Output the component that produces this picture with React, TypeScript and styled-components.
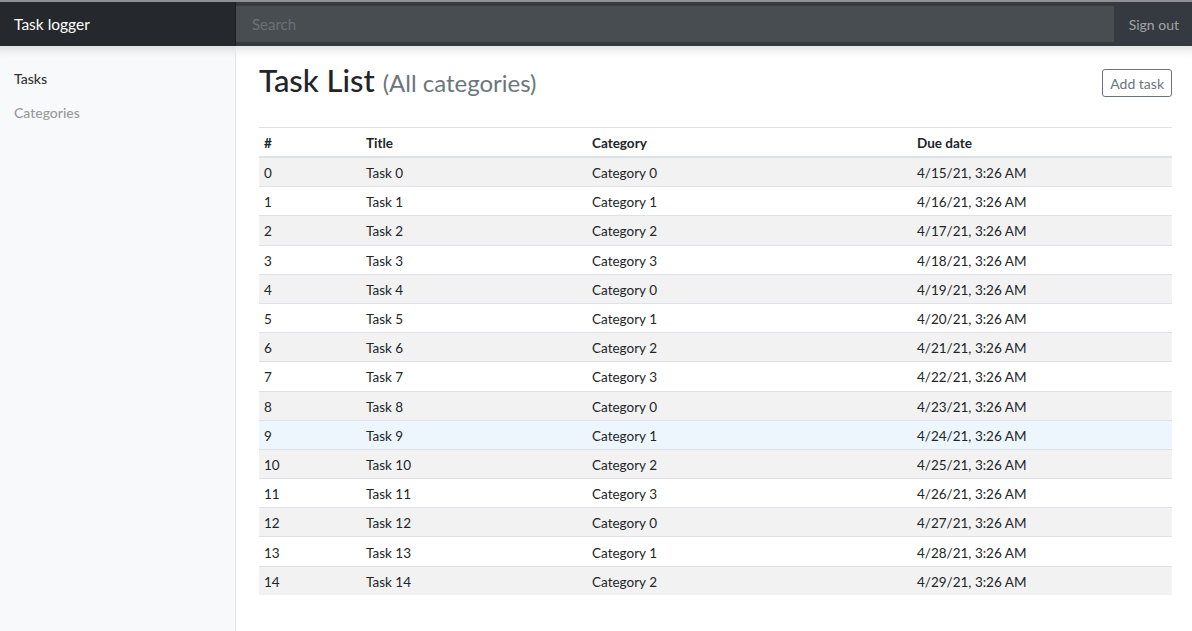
import React from 'react';
import styled, { createGlobalStyle } from 'styled-components';

const GlobalStyle = createGlobalStyle`
  html, body {
    margin: 0;
    padding: 0;
    background: #fff;
    font-family: Lato, "Noto Sans", "Liberation Sans", sans-serif;
    color: #212529;
  }
  * {
    box-sizing: border-box;
  }
`;

const tasks = Array.from({ length: 15 }, (_, i) => ({
  id: i,
  title: `Task ${i}`,
  category: `Category ${i % 4}`,
  due: `4/${15 + i}/21, 3:26 AM`,
}));

const App = () => {
  return (
    <Page>
      <GlobalStyle />
      <Navbar>
        <Brand>Task logger</Brand>
        <Search placeholder="Search" />
        <SignOut>Sign out</SignOut>
      </Navbar>
      <Body>
        <Sidebar>
          <NavLink $active>Tasks</NavLink>
          <NavLink>Categories</NavLink>
        </Sidebar>
        <Main>
          <Header>
            <Title>
              Task List <small>(All categories)</small>
            </Title>
            <OutlineButton>Add task</OutlineButton>
          </Header>
          <Table>
            <thead>
              <tr>
                <th style={{ width: 102 }}>#</th>
                <th style={{ width: 226 }}>Title</th>
                <th style={{ width: 325 }}>Category</th>
                <th>Due date</th>
              </tr>
            </thead>
            <tbody>
              {tasks.map((task) => (
                <Row key={task.id} $hover={task.id === 9}>
                  <td>{task.id}</td>
                  <td>{task.title}</td>
                  <td>{task.category}</td>
                  <td>{task.due}</td>
                </Row>
              ))}
            </tbody>
          </Table>
        </Main>
      </Body>
    </Page>
  );
};

export default App;

const Page = styled.div`
  height: 631px;
  display: flex;
  flex-direction: column;
  overflow: hidden;
`;

const Navbar = styled.header`
  height: 46px;
  display: flex;
  align-items: stretch;
  background: #343a40;
  border-top: 2px solid #8e9194;
  position: relative;
  z-index: 2;
`;

const Brand = styled.div`
  width: 236px;
  flex-shrink: 0;
  display: flex;
  align-items: center;
  padding-left: 14px;
  background: #25282c;
  color: #fff;
  font-size: 15.5px;
  box-shadow: inset -1px 0 0 rgba(0, 0, 0, 0.25);
`;

const Search = styled.input`
  flex: 1;
  margin: 4px 0;
  border: none;
  outline: none;
  padding: 0 16px;
  background: #484d52;
  color: #fff;
  font-family: inherit;
  font-size: 15px;
  &::placeholder {
    color: #6c7176;
  }
`;

const SignOut = styled.a`
  display: flex;
  align-items: center;
  padding: 0 13px 0 15px;
  color: rgba(255, 255, 255, 0.55);
  font-size: 14px;
  cursor: pointer;
`;

const Body = styled.div`
  flex: 1;
  display: flex;
  min-height: 0;
`;

const Sidebar = styled.nav`
  width: 236px;
  flex-shrink: 0;
  background: #f8f9fa;
  border-right: 1px solid #e4e5e6;
  box-shadow: inset 0 12px 10px -8px rgba(0, 0, 0, 0.12);
  padding-top: 16px;
  display: flex;
  flex-direction: column;
`;

const NavLink = styled.a<{ $active?: boolean }>`
  padding: 6px 14px;
  font-size: 14px;
  line-height: 22px;
  color: ${({ $active }) => ($active ? '#333' : '#999')};
  font-weight: 500;
`;

const Main = styled.main`
  flex: 1;
  padding: 0 20px 0 23px;
  box-shadow: inset 0 12px 10px -8px rgba(0, 0, 0, 0.12);
`;

const Header = styled.div`
  display: flex;
  justify-content: space-between;
  align-items: flex-start;
  padding-top: 14px;
  height: 81px;
`;

const Title = styled.h1`
  margin: 0;
  font-size: 31px;
  font-weight: 500;
  line-height: 40px;
  color: #212529;
  small {
    font-size: 24px;
    font-weight: 400;
    color: #6c757d;
  }
`;

const OutlineButton = styled.button`
  margin-top: 9px;
  height: 28px;
  padding: 0 7px;
  font-family: inherit;
  font-size: 14px;
  color: #6c757d;
  background: #fff;
  border: 1px solid #6c757d;
  border-radius: 3px;
`;

const Table = styled.table`
  width: 100%;
  border-collapse: collapse;
  font-size: 13.5px;
  th,
  td {
    text-align: left;
    padding: 5.1px 4px 3.1px 5px;
    line-height: 20px;
    border-top: 1px solid #dee2e6;
  }
  th {
    font-weight: 700;
    padding-top: 5px;
    padding-bottom: 3px;
    border-bottom: 2px solid #dee2e6;
  }
  tbody tr:first-child td {
    border-top: none;
  }
`;

const Row = styled.tr<{ $hover?: boolean }>`
  &:nth-child(odd) {
    background: #f2f2f2;
  }
  ${({ $hover }) => ($hover ? '&& { background: #eef6fd; }' : '')}
`;
